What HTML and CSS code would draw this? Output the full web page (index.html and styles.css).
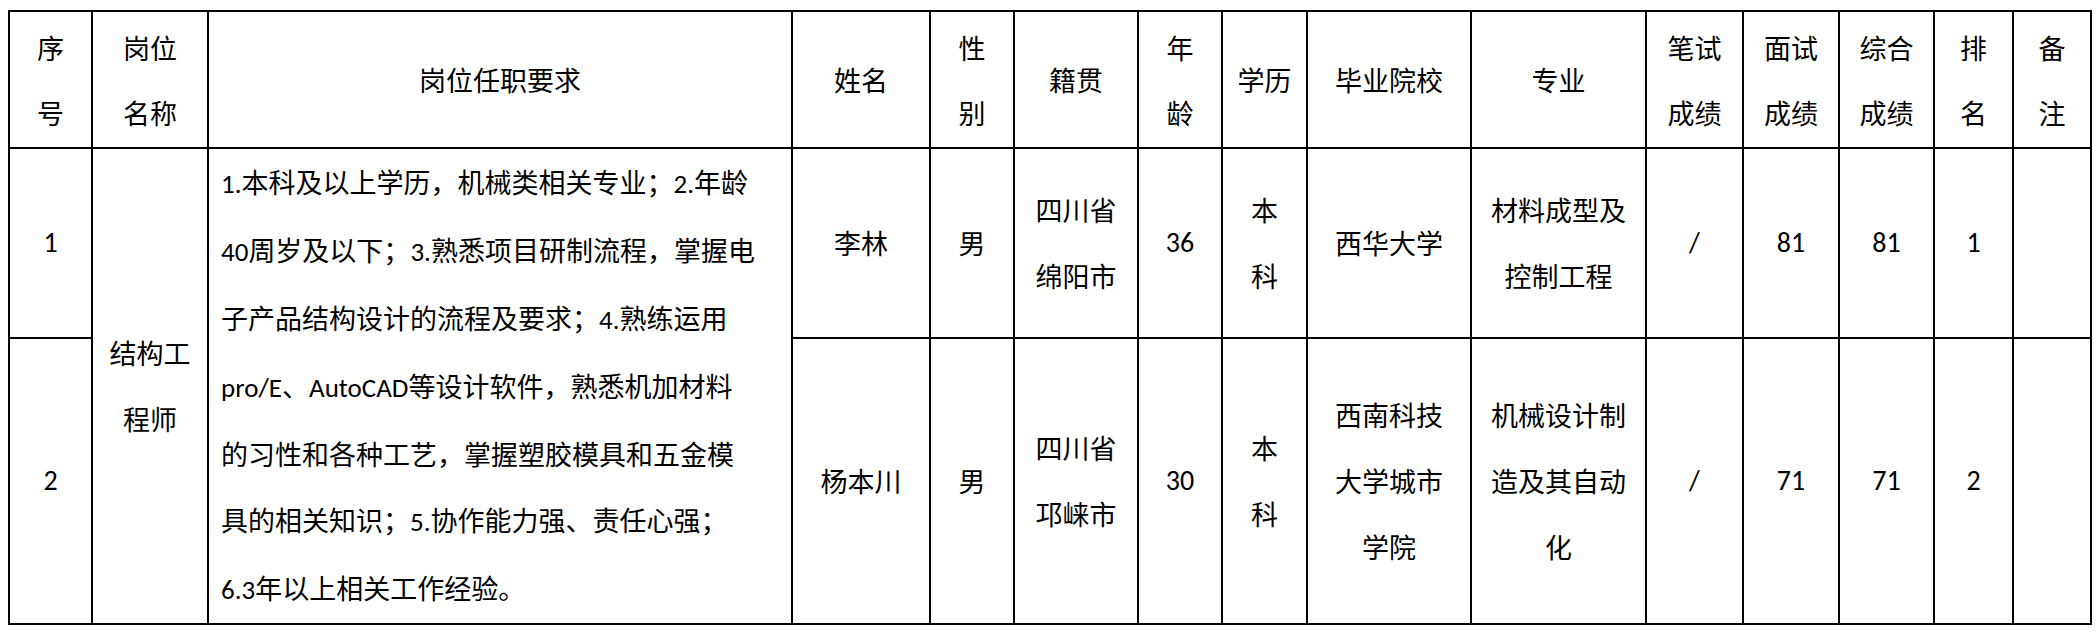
FILE: index.html
```html
<!DOCTYPE html>
<html lang="zh-CN">
<head>
<meta charset="utf-8">
<title>岗位任职要求</title>
<link rel="stylesheet" href="styles.css">
</head>
<body>
<table class="grid">
  <colgroup>
    <col class="c1"><col class="c2"><col class="c3"><col class="c4"><col class="c5">
    <col class="c6"><col class="c7"><col class="c8"><col class="c9"><col class="c10">
    <col class="c11"><col class="c12"><col class="c13"><col class="c14"><col class="c15">
  </colgroup>
  <thead>
    <tr class="head">
      <th>序<br>号</th>
      <th>岗位<br>名称</th>
      <th>岗位任职要求</th>
      <th>姓名</th>
      <th>性<br>别</th>
      <th>籍贯</th>
      <th>年<br>龄</th>
      <th>学历</th>
      <th>毕业院校</th>
      <th>专业</th>
      <th>笔试<br>成绩</th>
      <th>面试<br>成绩</th>
      <th>综合<br>成绩</th>
      <th>排<br>名</th>
      <th>备<br>注</th>
    </tr>
  </thead>
  <tbody>
    <tr class="r1">
      <td class="lat">1</td>
      <td rowspan="2">结构工<br>程师</td>
      <td rowspan="2" class="req"><span class="lat">1.</span>本科及以上学历，机械类相关专业；<span class="lat">2.</span>年龄<br><span class="lat">40</span>周岁及以下；<span class="lat">3.</span>熟悉项目研制流程，掌握电<br>子产品结构设计的流程及要求；<span class="lat">4.</span>熟练运用<br><span class="lat">pro/E</span>、<span class="lat">AutoCAD</span>等设计软件，熟悉机加材料<br>的习性和各种工艺，掌握塑胶模具和五金模<br>具的相关知识；<span class="lat">5.</span>协作能力强、责任心强；<br><span class="lat">6.3</span>年以上相关工作经验。</td>
      <td>李林</td>
      <td>男</td>
      <td>四川省<br>绵阳市</td>
      <td class="lat">36</td>
      <td>本<br>科</td>
      <td>西华大学</td>
      <td>材料成型及<br>控制工程</td>
      <td class="lat">/</td>
      <td class="lat">81</td>
      <td class="lat">81</td>
      <td class="lat">1</td>
      <td></td>
    </tr>
    <tr class="r2">
      <td class="lat">2</td>
      <td>杨本川</td>
      <td>男</td>
      <td>四川省<br>邛崃市</td>
      <td class="lat">30</td>
      <td>本<br>科</td>
      <td>西南科技<br>大学城市<br>学院</td>
      <td>机械设计制<br>造及其自动<br>化</td>
      <td class="lat">/</td>
      <td class="lat">71</td>
      <td class="lat">71</td>
      <td class="lat">2</td>
      <td></td>
    </tr>
  </tbody>
</table>
</body>
</html>
```
FILE: styles.css
```css
html, body {
  margin: 0;
  padding: 0;
  background: #ffffff;
}

body {
  padding: 10px 0 0 8px;
  font-family: "Noto Sans CJK SC", "Noto Sans", sans-serif;
  color: #000000;
}

.grid {
  border-collapse: collapse;
  table-layout: fixed;
  width: 2084px;
  font-size: 27px;
  line-height: 66px;
}

.grid th,
.grid td {
  border: 2px solid #000000;
  padding: 0 4px;
  text-align: center;
  vertical-align: middle;
  font-weight: 400;
  white-space: nowrap;
}

.grid .head th {
  line-height: 65px;
  height: 135px;
}

.grid .r1 td {
  height: 186px;
}

.grid .r2 td {
  height: 282px;
}

.grid td.req {
  text-align: left;
  padding-left: 12px;
  line-height: 66px;
}

.lat {
  font-family: Carlito, Calibri, Lato, "Noto Sans CJK SC", sans-serif;
  font-size: 28px;
}

.req .lat {
  font-size: 27px;
}

.c1 { width: 83px; }
.c2 { width: 116px; }
.c3 { width: 584px; }
.c4 { width: 138px; }
.c5 { width: 84px; }
.c6 { width: 124px; }
.c7 { width: 84px; }
.c8 { width: 85px; }
.c9 { width: 164px; }
.c10 { width: 175px; }
.c11 { width: 97px; }
.c12 { width: 96px; }
.c13 { width: 95px; }
.c14 { width: 79px; }
.c15 { width: 78px; }
```
